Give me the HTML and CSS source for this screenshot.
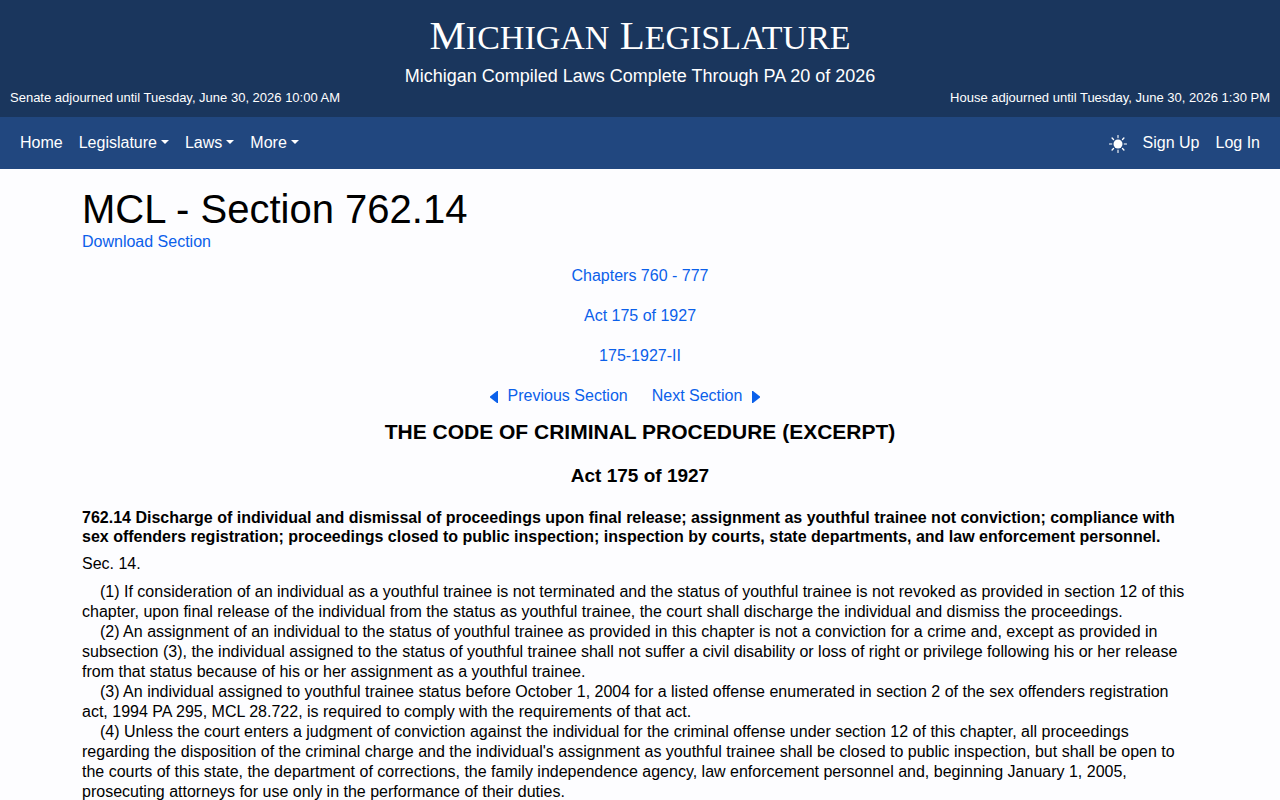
FILE: index.html
```html
<!DOCTYPE html>
<html lang="en">
<head>
    <meta charset="UTF-8">
    <meta name="viewport" content="width=device-width, initial-scale=1.0">
    <title>MCL - Section 762.14 - Michigan Legislature</title>
    <link rel="stylesheet" href="styles.css">
</head>
<body>
    <header class="site-header">
        <div class="site-title">M<span class="small-cap">ichigan</span> L<span class="small-cap">egislature</span></div>
        <div class="site-subtitle">Michigan Compiled Laws Complete Through PA 20 of 2026</div>
        <div class="session-status">
            <span>Senate adjourned until Tuesday, June 30, 2026 10:00 AM</span>
            <span>House adjourned until Tuesday, June 30, 2026 1:30 PM</span>
        </div>
    </header>

    <nav class="navbar">
        <div class="nav-group">
            <a class="nav-link" href="#">Home</a>
            <button type="button" class="nav-link dropdown-toggle">Legislature</button>
            <button type="button" class="nav-link dropdown-toggle">Laws</button>
            <button type="button" class="nav-link dropdown-toggle">More</button>
        </div>
        <div class="nav-group">
            <button type="button" class="theme-toggle" aria-label="Toggle theme">
                <svg width="18" height="18" viewBox="0 0 18 18" fill="none" stroke="#fff" stroke-linecap="round">
                    <circle cx="9" cy="9" r="4.5" fill="#fff" stroke="none"/>
                    <path d="M9 .6v2M9 15.4v2M.6 9h2M15.4 9h2" stroke-width="1.6" opacity=".7"/>
                    <path d="M3.1 3.1l1.4 1.4M13.5 13.5l1.4 1.4M3.1 14.9l1.4-1.4M13.5 4.5l1.4-1.4" stroke-width="1.4"/>
                </svg>
            </button>
            <a class="nav-link" href="#">Sign Up</a>
            <a class="nav-link" href="#">Log In</a>
        </div>
    </nav>

    <main class="container">
        <h1>MCL - Section 762.14</h1>
        <a href="#">Download Section</a>

        <div class="breadcrumbs">
            <a href="#">Chapters 760 - 777</a>
            <a href="#">Act 175 of 1927</a>
            <a href="#">175-1927-II</a>
            <div class="section-pager">
                <a href="#">
                    <svg class="arrow" width="8" height="12" viewBox="0 0 8 12"><path d="M7 0h1v12H7L0 6.500v-1z" fill="currentColor"/></svg>
                    Previous Section
                </a>
                <a href="#">
                    Next Section
                    <svg class="arrow" width="8" height="12" viewBox="0 0 8 12"><path d="M1 0H0v12h1l7-5.500v-1z" fill="currentColor"/></svg>
                </a>
            </div>
        </div>

        <h2>THE CODE OF CRIMINAL PROCEDURE (EXCERPT)</h2>
        <h3>Act 175 of 1927</h3>

        <h4>762.14 Discharge of individual and dismissal of proceedings upon final release; assignment as youthful trainee not conviction; compliance with sex offenders registration; proceedings closed to public inspection; inspection by courts, state departments, and law enforcement personnel.</h4>

        <p class="section-number">Sec. 14.</p>
        <div class="section-body">
            <p>(1) If consideration of an individual as a youthful trainee is not terminated and the status of youthful trainee is not revoked as provided in section 12 of this chapter, upon final release of the individual from the status as youthful trainee, the court shall discharge the individual and dismiss the proceedings.</p>
            <p>(2) An assignment of an individual to the status of youthful trainee as provided in this chapter is not a conviction for a crime and, except as provided in subsection (3), the individual assigned to the status of youthful trainee shall not suffer a civil disability or loss of right or privilege following his or her release from that status because of his or her assignment as a youthful trainee.</p>
            <p>(3) An individual assigned to youthful trainee status before October 1, 2004 for a listed offense enumerated in section 2 of the sex offenders registration act, 1994 PA 295, MCL 28.722, is required to comply with the requirements of that act.</p>
            <p>(4) Unless the court enters a judgment of conviction against the individual for the criminal offense under section 12 of this chapter, all proceedings regarding the disposition of the criminal charge and the individual's assignment as youthful trainee shall be closed to public inspection, but shall be open to the courts of this state, the department of corrections, the family independence agency, law enforcement personnel and, beginning January 1, 2005, prosecuting attorneys for use only in the performance of their duties.</p>
        </div>
    </main>
</body>
</html>
```
FILE: styles.css
```css
* {
    margin: 0;
    padding: 0;
    box-sizing: border-box;
}

body {
    font-family: "Liberation Sans", Arial, sans-serif;
    font-size: 16px;
    line-height: 20px;
    color: #000;
    background: #fdfdff;
}

a {
    color: #0b60ea;
    text-decoration: none;
}

.site-header {
    padding: 10px 10px 12px;
    background: #1a365d;
    color: #fff;
    text-align: center;
}

.site-title {
    font-family: Georgia, "Liberation Serif", serif;
    font-size: 41px;
    line-height: 50px;
}

.small-cap {
    font-size: 34px;
    line-height: 1;
    text-transform: uppercase;
}

.site-subtitle {
    padding-top: 1px;
    font-size: 18px;
    line-height: 30px;
}

.session-status {
    display: flex;
    justify-content: space-between;
    font-size: 13px;
    line-height: 14px;
}

.navbar {
    display: flex;
    justify-content: space-between;
    align-items: center;
    padding: 16px 20px;
    background: #21477f;
}

.nav-group {
    display: flex;
    align-items: center;
    gap: 16px;
}

.nav-link {
    border: none;
    background: none;
    font: inherit;
    color: #fff;
    cursor: pointer;
}

.dropdown-toggle::after {
    content: "";
    display: inline-block;
    margin-left: 4px;
    vertical-align: 4px;
    border-top: 4px solid;
    border-right: 4px solid transparent;
    border-left: 4px solid transparent;
}

.theme-toggle {
    display: flex;
    padding-top: 2px;
    border: none;
    background: none;
    cursor: pointer;
}

.container {
    max-width: 1140px;
    margin: 0 auto;
    padding: 20px 12px;
}

h1 {
    margin-bottom: 3px;
    font-size: 40px;
    font-weight: 400;
    line-height: 40px;
}

.breadcrumbs {
    display: flex;
    flex-direction: column;
    align-items: center;
    gap: 20px;
    margin-top: 14px;
}

.section-pager {
    display: flex;
    gap: 24px;
    padding-right: 30px;
}

.section-pager a {
    display: flex;
    align-items: center;
    gap: 10px;
}

.arrow {
    margin-top: 2px;
}

h2 {
    margin-top: 14px;
    font-size: 21px;
    line-height: 24px;
    text-align: center;
}

h3 {
    margin-top: 20px;
    font-size: 19px;
    line-height: 24px;
    text-align: center;
}

h4 {
    margin-top: 20px;
    font-size: 16px;
    line-height: 19px;
}

.section-number {
    margin: 8px 0;
}

.section-body p {
    text-indent: 18px;
}
```
